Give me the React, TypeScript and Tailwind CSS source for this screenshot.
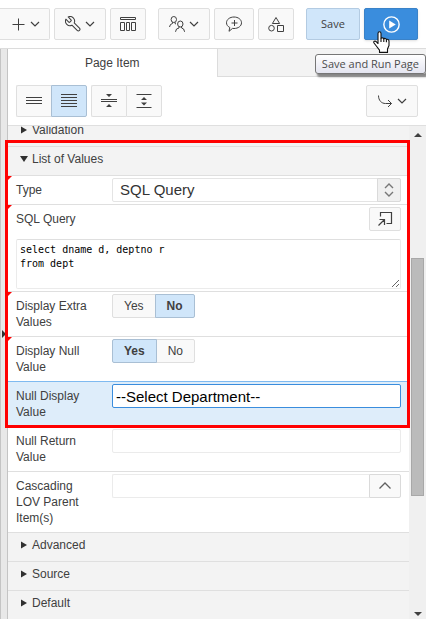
import type { ReactNode } from "react";

const toolButton =
  "flex h-8 shrink-0 items-center justify-center gap-1 rounded-xs border border-[#dfdfdf] bg-[#f9f9f9] text-[#404040]";

function Icon({ children, size = "size-4" }: { children: ReactNode; size?: string }) {
  return (
    <svg viewBox="0 0 16 16" className={`${size} shrink-0`} fill="none" stroke="currentColor" aria-hidden="true">
      {children}
    </svg>
  );
}

function Chevron() {
  return (
    <svg viewBox="0 0 10 16" className="h-4 w-2.5 shrink-0" fill="none" stroke="currentColor" strokeWidth="1.2" aria-hidden="true">
      <path d="M1 6 L5 10 L9 6" />
    </svg>
  );
}

function Toolbar() {
  return (
    <header className="flex items-center gap-1 border-b border-[#dcdcdc] bg-white py-2 pr-2">
      <button aria-label="Create" className={`${toolButton} w-[50px] rounded-l-none border-l-0`}>
        <Icon>
          <path d="M8.5 2.5v12M2.5 8.5h12" />
        </Icon>
        <Chevron />
      </button>
      <button aria-label="Utilities" className={`${toolButton} w-[52px]`}>
        <Icon>
          <path
            transform="translate(17.200 -1) scale(-0.760 0.760)"
            strokeWidth="1.400"
            strokeLinejoin="round"
            d="M14.700 6.300a1 1 0 0 0 0 1.400l1.600 1.600a1 1 0 0 0 1.400 0l3.770-3.770a6 6 0 0 1-7.940 7.940l-6.910 6.910a2.120 2.120 0 0 1-3-3l6.910-6.910a6 6 0 0 1 7.940-7.940l-3.760 3.760z"
          />
        </Icon>
        <Chevron />
      </button>
      <button aria-label="Page layout" className={`${toolButton} w-9`}>
        <Icon>
          <path d="M.5 1.500h15v2H.5zM.5 6.500h4v8h-4zM6.500 6.500h3v8h-3zM11.500 6.500h4v8h-4z" />
        </Icon>
      </button>
      <button aria-label="Team development" className={`${toolButton} ml-2 w-[52px]`}>
        <Icon>
          <ellipse cx="4.800" cy="3.500" rx="2.700" ry="3" />
          <path d="M3.500 6.200v1.300L1.500 8.500.5 11M6 6.200v1.300l1 .5" />
          <ellipse cx="11.300" cy="8" rx="2.700" ry="3" />
          <path d="M10 10.700V12l-2.500 1-1 2.800M12.600 10.700V12l2 1 1 2.800" />
        </Icon>
        <Chevron />
      </button>
      <button aria-label="Comment" className={`${toolButton} w-10`}>
        <Icon>
          <path d="M3.800 11.500C1.500 10.300.5 8.700.5 6.800.5 3.500 3.800 1 8 1s7.500 2.500 7.500 5.800-3.300 5.700-7.500 5.700L6.500 12.400 3 15.300z" strokeLinejoin="round" />
          <path d="M8.500 4v6M5.500 7h6" />
        </Icon>
      </button>
      <button aria-label="Shared components" className={`${toolButton} w-9`}>
        <Icon>
          <path d="M8 1.500 L11.600 7.500 H4.400 Z" />
          <circle cx="3.500" cy="12.200" r="2.800" />
          <path d="M9.500 9.500h6v6h-6z" />
        </Icon>
      </button>
      <button className="ml-auto h-8 w-[54px] shrink-0 rounded-xs border border-[#b3cbe2] bg-[#d0e6fa] font-['Open_Sans',sans-serif] text-[11px] text-[#404040]">
        Save
      </button>
      <div className="relative shrink-0">
        <button
          aria-label="Save and Run Page"
          aria-describedby="run-tip"
          className="flex h-8 w-[54px] items-center justify-center rounded-xs border border-[#3a82c8] bg-[#3a8ddd] text-white shadow"
        >
          <Icon size="size-[17px]">
            <circle cx="8" cy="8" r="7.200" strokeWidth="1.300" />
            <path d="M5.800 4.300 L12 8 L5.800 11.700 Z" fill="currentColor" stroke="none" />
          </Icon>
        </button>
        <div
          id="run-tip"
          role="tooltip"
          className="absolute top-[46px] -right-2 z-20 rounded-[3px] border border-[#767676] bg-linear-to-b from-white to-[#e4e5f0] px-1.5 font-['Open_Sans',sans-serif] text-[11px] leading-[18px] whitespace-nowrap text-[#4c4c4c] shadow-[2px_3px_2px_rgba(0,0,0,0.45)]"
        >
          Save and Run Page
        </div>
        <svg viewBox="0 0 17 22" className="absolute top-[23px] left-[9px] z-30 h-[22px] w-[17px]" fill="#fff" stroke="#111" strokeWidth="1.100" strokeLinejoin="round" aria-hidden="true">
          <path d="M5 12.500V2.500C5 .2 8 .2 8 2.500v5c.4-1 2.600-.9 2.800.4.500-.8 2.400-.6 2.600.7.700-.6 2.600-.2 2.600 1.400v4.500l-1.500 3.500v3.400H6.500v-2.200L3.300 15 1 12c-.8-1.400.9-2.600 2.200-1.300z" />
          <path d="M8 7.500v3.500M10.800 8v3M13.400 8.700v2.500" fill="none" />
        </svg>
      </div>
    </header>
  );
}

function Tabs() {
  return (
    <div role="tablist" className="flex h-7 text-xs text-[#404040]">
      <button role="tab" aria-selected="true" className="flex-1 bg-white">
        Page Item
      </button>
      <button role="tab" aria-selected="false" aria-label="Page" className="flex-1 border-b border-l border-[#dcdcdc] bg-[#f3f3f3]" />
    </div>
  );
}

function EditorToolbar() {
  return (
    <div className="flex justify-between border-b border-[#dfdfdf] p-2">
      <div className="flex gap-1">
        <div className="flex">
          <button aria-label="Show common" className={`${toolButton} w-[35px] rounded-r-none border-r-0`}>
            <Icon>
              <path d="M0 4.500h16M0 7.500h16M0 10.500h16" />
            </Icon>
          </button>
          <button aria-label="Show all" aria-pressed="true" className="flex h-8 w-9 items-center justify-center rounded-r-xs border border-[#a9bfd4] bg-[#d0e6fa] text-[#404040]">
            <Icon>
              <path d="M0 1.500h16M0 4.500h16M0 7.500h16M0 10.500h16M0 13.500h16" />
            </Icon>
          </button>
        </div>
        <div className="flex">
          <button aria-label="Collapse all" className={`${toolButton} w-[35px] rounded-r-none border-r-0`}>
            <Icon>
              <path d="M0 6.500h16M0 8.500h16" />
              <path d="M5 1h6L8 4zM5 14h6l-3-3z" fill="currentColor" stroke="none" />
            </Icon>
          </button>
          <button aria-label="Expand all" className={`${toolButton} w-9 rounded-l-none`}>
            <Icon>
              <path d="M.5 1.500h15M.5 14.500h15" />
              <path d="M5 7h6L8 4zM5 9.500h6l-3 3z" fill="currentColor" stroke="none" />
            </Icon>
          </button>
        </div>
      </div>
      <button aria-label="Go to group" className={`${toolButton} w-[52px]`}>
        <Icon>
          <path d="M1.500 2.500c0 5 3 8 7 8h6M11 7l3.500 3.500L11 14" />
        </Icon>
        <Chevron />
      </button>
    </div>
  );
}

function GroupHeader({ title, open = false }: { title: string; open?: boolean }) {
  return (
    <button
      aria-expanded={open}
      className="flex h-[29px] w-full shrink-0 items-center gap-1 border-t border-[#dfdfdf] bg-[#f3f3f3] pb-1 pl-3 text-left text-xs text-[#404040]"
    >
      <svg viewBox="0 0 8 8" className="size-2" fill="#303030" aria-hidden="true">
        {open ? <path d="M0 1h8L4 7z" /> : <path d="M1 0.500v7L7 4z" />}
      </svg>
      {title}
    </button>
  );
}

function Row({
  label,
  htmlFor,
  changed,
  active,
  children,
}: {
  label: string;
  htmlFor?: string;
  changed?: boolean;
  active?: boolean;
  children: ReactNode;
}) {
  return (
    <div className={`relative flex items-start border-t pr-2 pl-2 ${active ? "border-[#7fbaf0] bg-[#deedfa]" : "border-[#dfdfdf] bg-white"}`}>
      {changed && <span className="absolute top-0 left-0 border-t-4 border-r-4 border-t-[#f00] border-r-transparent" />}
      <div className="w-24 shrink-0 py-1.5 pr-4">
        {htmlFor ? <label htmlFor={htmlFor} className="block">{label}</label> : <span className="block">{label}</span>}
      </div>
      <div className="flex min-w-0 flex-1 pt-0.5">{children}</div>
    </div>
  );
}

function YesNo({ name, value }: { name: string; value: "Yes" | "No" }) {
  return (
    <fieldset aria-label={name} className="flex">
      {["Yes", "No"].map((option, i) => (
        <label
          key={option}
          className={`relative flex h-6 items-center border px-[11px] ${i === 0 ? "rounded-l-xs" : "-ml-px rounded-r-xs"} ${
            option === value ? "z-1 border-[#a9bfd4] bg-[#d0e6fa] font-bold" : "border-[#dfdfdf] bg-[#f9f9f9]"
          }`}
        >
          <input type="radio" name={name} value={option} defaultChecked={option === value} className="sr-only" />
          {option}
        </label>
      ))}
    </fieldset>
  );
}

const field = "h-6 min-w-0 flex-1 rounded-xs border border-[#ebebeb] bg-white px-[3px] text-[15px] outline-none";

function ListOfValues() {
  return (
    <section className="relative">
      <GroupHeader title="List of Values" open />
      <Row label="Type" htmlFor="lov-type" changed>
        <div className="relative flex flex-1">
          <select id="lov-type" className="h-6 w-full appearance-none rounded-xs border border-[#e4e4e4] bg-white pr-7 pl-[7px] text-[15px] leading-5 text-[#333]">
            <option>SQL Query</option>
          </select>
          <span className="pointer-events-none absolute top-0 right-0 flex h-6 w-6 items-center justify-center rounded-r-xs border border-[#dadada] bg-[#f0f0f0] text-[#777]">
            <Icon>
              <path d="M4 6l4-4 4 4M4 10l4 4 4-4" strokeWidth="1.400" />
            </Icon>
          </span>
        </div>
      </Row>
      <div className="relative border-t border-[#dfdfdf] bg-white px-2 pt-0.5 pb-0.5">
        <span className="absolute top-0 left-0 border-t-4 border-r-4 border-t-[#f00] border-r-transparent" />
        <div className="flex items-center justify-between">
          <label htmlFor="lov-sql">SQL Query</label>
          <button aria-label="Open code editor" className="flex h-6 w-8 items-center justify-center rounded-xs border border-[#dfdfdf] bg-[#f9f9f9]">
            <Icon>
              <path d="M3.500 5.500v-4h11v11H9.500M1.500 14.500l6-6M2.500 8.500h5v5.500" strokeWidth="1.200" />
            </Icon>
          </button>
        </div>
        <textarea
          id="lov-sql"
          spellCheck={false}
          className="mt-2 block h-[50px] w-full resize-y rounded-xs border border-[#ebebeb] border-t-[#dfdfdf] px-[3px] py-[3px] font-['DejaVu_Sans_Mono',monospace] text-[10px] leading-[14px] text-black outline-none"
          defaultValue={"select dname d, deptno r\nfrom dept"}
        />
      </div>
      <Row label="Display Extra Values" changed>
        <YesNo name="Display Extra Values" value="No" />
      </Row>
      <Row label="Display Null Value" changed>
        <YesNo name="Display Null Value" value="Yes" />
      </Row>
      <Row label="Null Display Value" htmlFor="null-display" active>
        <input id="null-display" defaultValue="--Select Department--" className="h-6 min-w-0 flex-1 rounded-xs border border-[#3a8ddd] bg-white px-[3px] text-[15px] text-black outline-none" />
      </Row>
      <div className="pointer-events-none absolute -top-1.5 -right-px -bottom-0.5 -left-[3px] z-10 border-3 border-[#f00]" />
    </section>
  );
}

function Scrollbar() {
  return (
    <div className="flex w-[17px] shrink-0 flex-col items-center bg-[#f0f0f0]" aria-hidden="true">
      <svg viewBox="0 0 8 17" className="h-[17px] w-2" fill="#404040">
        <path d="M0 11h8L4 7z" />
      </svg>
      <div className="flex-[115]" />
      <div className="w-[13px] flex-[238] border border-[#a8a8a8] bg-[#bbb]" />
      <div className="flex-[110]" />
      <svg viewBox="0 0 8 13" className="h-[13px] w-2" fill="#404040">
        <path d="M0 6h8l-4 4z" />
      </svg>
    </div>
  );
}

export default function App() {
  return (
    <div className="flex min-h-screen flex-col bg-white font-['Liberation_Sans',Arial,sans-serif] text-xs text-[#404040]">
      <Toolbar />
      <div className="flex flex-1">
        <div className="flex w-2 shrink-0 items-center justify-center border-x border-[#c4c4c4] bg-[#e8e8e8]">
          <svg viewBox="0 0 4 8" className="h-2 w-1" fill="#303030" aria-hidden="true">
            <path d="M0 0v8l4-4z" />
          </svg>
        </div>
        <main className="flex min-w-0 flex-1 flex-col">
          <Tabs />
          <EditorToolbar />
          <div className="flex flex-1">
            <div className="min-w-0 flex-1 bg-[#f3f3f3]">
              <div className="flex h-5 flex-col justify-end overflow-hidden">
                <GroupHeader title="Validation" />
              </div>
              <ListOfValues />
              <Row label="Null Return Value" htmlFor="null-return">
                <input id="null-return" className={field} />
              </Row>
              <Row label="Cascading LOV Parent Item(s)" htmlFor="cascading">
                <input id="cascading" className={`${field} rounded-r-none border-r-0`} />
                <button aria-label="Pick items" className="flex h-6 w-8 items-center justify-center rounded-r-xs border border-[#dadada] bg-[#f9f9f9] text-[#606060]">
                  <Icon>
                    <path d="M2.500 10.500 L8 5 L13.500 10.500" strokeWidth="1.300" />
                  </Icon>
                </button>
              </Row>
              <GroupHeader title="Advanced" />
              <GroupHeader title="Source" />
              <GroupHeader title="Default" />
            </div>
            <Scrollbar />
          </div>
        </main>
      </div>
    </div>
  );
}
